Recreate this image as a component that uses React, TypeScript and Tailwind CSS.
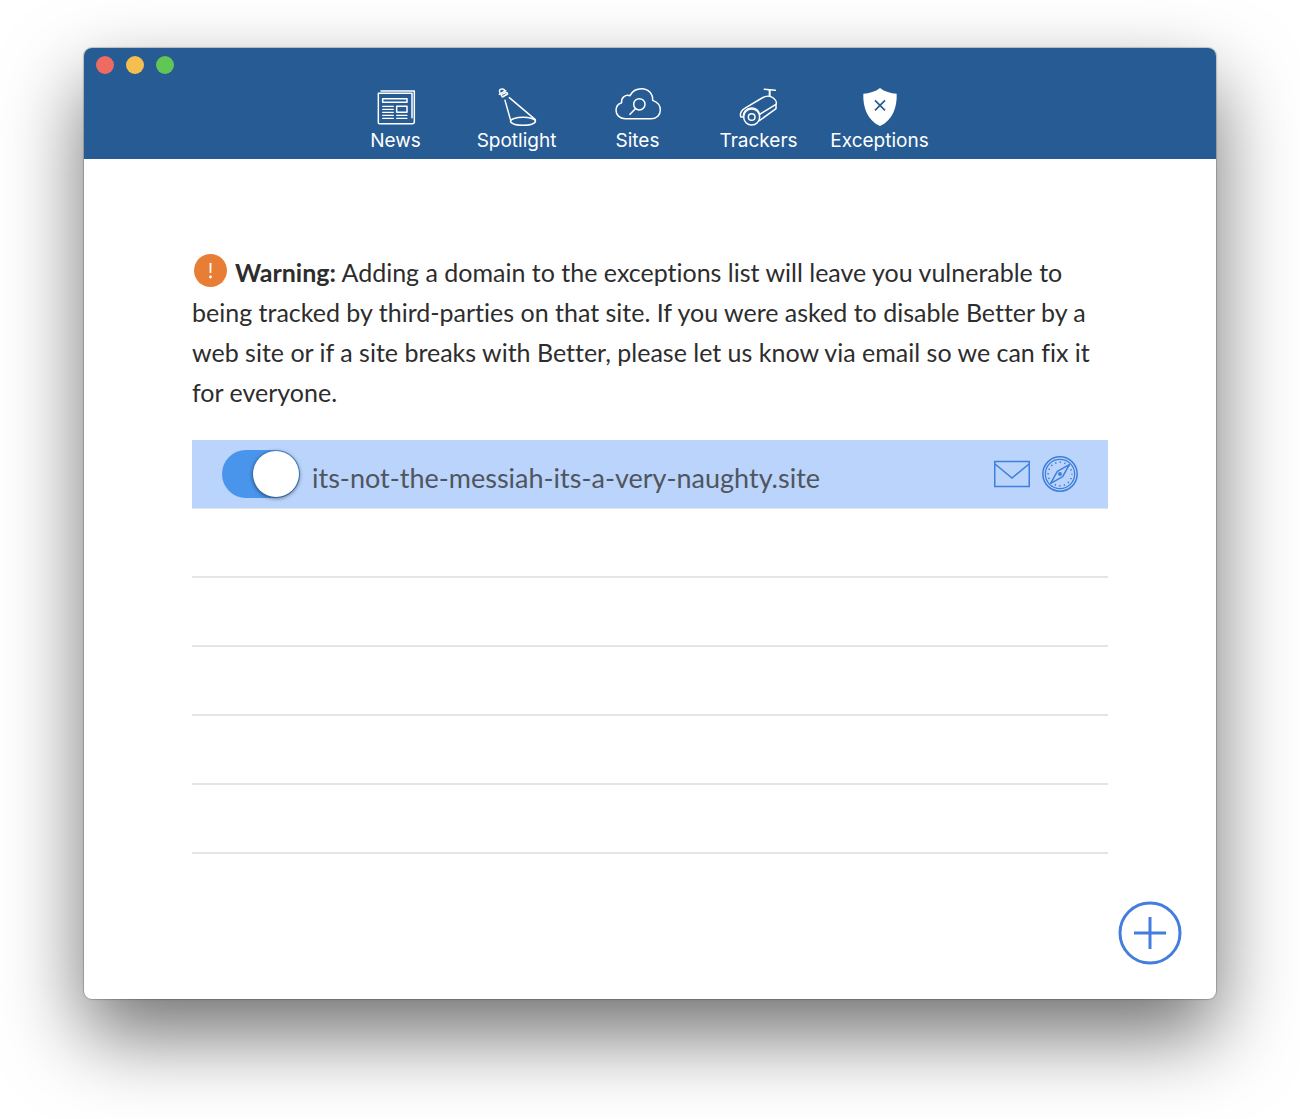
import { useState } from "react";
import type { ReactNode } from "react";

const stroke = {
  fill: "none",
  stroke: "#fff",
  strokeWidth: 4.5,
  strokeLinejoin: "round" as const,
  strokeLinecap: "round" as const,
};

function NewsIcon() {
  return (
    <svg viewBox="33 18 144 120" className="h-10 w-12" aria-hidden="true" {...stroke}>
      <path d="M60 33H160V126" />
      <path d="M52 40H153V113M160 126Q160 131 155 131H55Q52 131 52 128V40" />
      <rect x="65" y="56" width="73" height="11" />
      <rect x="107" y="79" width="31" height="18" />
      <path d="M65 79H97M65 88H97M65 97H97M65 106H97M65 115H97M107 106H138M107 115H138" strokeWidth="4" />
    </svg>
  );
}

function SpotlightIcon() {
  return (
    <svg viewBox="396 18 144 120" className="h-10 w-12" aria-hidden="true" {...stroke}>
      <path d="M418 41C413 33 416 27 422 27C428 26 432 30 431 36" />
      <path d="M415 43L434 32" />
      <path d="M420 44L437 37L440 42L424 51Z" />
      <path d="M432 61L449 121M445 53L523 119" />
      <ellipse cx="486" cy="124" rx="37.500" ry="12" />
    </svg>
  );
}

function SitesIcon() {
  return (
    <svg viewBox="42 18 144 120" className="h-10 w-12" aria-hidden="true" {...stroke}>
      <path d="M76 116C58 116 48 104 48 91C48 80 54 71 65 68C63 54 75 43 90 47C96 34 110 26 125 26C145 26 159 41 158 61C172 66 181 77 181 90C181 105 170 116 154 116Z" />
      <circle cx="118" cy="73" r="17" />
      <path d="M106 86L90 103" />
    </svg>
  );
}

function TrackersIcon() {
  return (
    <svg viewBox="405 18 144 120" className="h-10 w-12" aria-hidden="true" {...stroke}>
      <path d="M493 28L526 31" />
      <path d="M509 31V48" strokeWidth="6" />
      <circle cx="455" cy="111" r="24" />
      <circle cx="455" cy="111" r="10" />
      <path d="M422 110C419 99 425 91 434 85L486 54C497 47 511 47 520 54C528 60 531 66 528 73L479 103" />
      <path d="M424 111H430C429 96 439 86 454 84C466 83 477 91 479 103M528 75V86L478 122" />
    </svg>
  );
}

function ExceptionsIcon() {
  return (
    <svg viewBox="108 18 144 120" className="h-10 w-12" aria-hidden="true" fill="none">
      <path d="M180 24C194 35 212 40 230 41C232 82 217 121 180 138C143 121 128 82 130 41C148 40 166 35 180 24Z" fill="#fff" />
      <path d="M165 61L195 91M195 61L165 91" stroke="#265b94" strokeWidth="5" />
    </svg>
  );
}

function MailIcon() {
  return (
    <svg viewBox="0 0 36 28" className="h-7 w-9" aria-hidden="true" fill="none" stroke="#3f7fdc" strokeWidth="1.5">
      <rect x="0.750" y="1.500" width="34.500" height="25" />
      <path d="M1 4L18 18L35 4" />
    </svg>
  );
}

function CompassIcon() {
  return (
    <svg viewBox="0 0 108 108" className="size-9" aria-hidden="true" fill="none" stroke="#3f7fdc" strokeWidth="4.5">
      <circle cx="54" cy="54" r="51.500" />
      <circle cx="54" cy="54" r="44" strokeWidth="4" />
      <circle cx="54" cy="54" r="35.500" strokeWidth="5" strokeDasharray="4 9.940" strokeDashoffset="2" />
      <path d="M82 26L62 62L26 82L46 46Z" fill="#bbd4fb" strokeLinejoin="round" />
      <circle cx="54" cy="54" r="3.500" fill="#3f7fdc" />
    </svg>
  );
}

const tabs: { label: string; icon: ReactNode }[] = [
  { label: "News", icon: <NewsIcon /> },
  { label: "Spotlight", icon: <SpotlightIcon /> },
  { label: "Sites", icon: <SitesIcon /> },
  { label: "Trackers", icon: <TrackersIcon /> },
  { label: "Exceptions", icon: <ExceptionsIcon /> },
];

const emptyRows = [1, 2, 3, 4, 5];

export default function App() {
  const [enabled, setEnabled] = useState(true);

  return (
    <div className="bg-white px-[84px] pt-12 pb-[120px] font-['Lato',sans-serif] text-[#2d2d2d] [font-variant-ligatures:none]">
      <div className="overflow-hidden rounded-lg bg-white shadow-[0_0_1px_1px_rgba(0,0,0,0.2),0_36px_80px_rgba(0,0,0,0.56)]">
        <header className="bg-[#265b94] pt-2 pb-1">
          <div className="flex gap-3 px-3">
            <button type="button" aria-label="Close" className="size-[18px] rounded-full bg-[#ed6b60]" />
            <button type="button" aria-label="Minimize" className="size-[18px] rounded-full bg-[#f5bf4f]" />
            <button type="button" aria-label="Zoom" className="size-[18px] rounded-full bg-[#62c655]" />
          </div>
          <nav className="mt-3 flex justify-center pr-[25px]">
            {tabs.map((tab) => (
              <button
                key={tab.label}
                type="button"
                className="flex w-[121px] flex-col items-center gap-px font-['Inter',sans-serif] text-[19px] leading-7 text-white"
              >
                {tab.icon}
                {tab.label}
              </button>
            ))}
          </nav>
        </header>

        <main className="flex flex-col">
          <div className="px-[108px] pt-[93px]">
            <p className="text-[25px] leading-10">
              <span
                role="img"
                aria-label="Warning"
                className="mr-2 ml-0.5 inline-flex size-[33px] items-center justify-center rounded-full bg-[#e87e35] align-[-5px]"
              >
                <svg viewBox="0 0 33 33" className="size-[33px]" aria-hidden="true" fill="#fff">
                  <path d="M15.500 9H17.500L17.300 19H15.700Z" />
                  <circle cx="16.500" cy="23" r="1.400" />
                </svg>
              </span>
              <strong className="font-bold">Warning:</strong> Adding a domain to the exceptions list will leave you
              vulnerable to being tracked by third-parties on that site. If you were asked to disable Better by a web
              site or if a site breaks with Better, please let us know via email so we can fix it for everyone.
            </p>

            <ul className="mt-7">
              <li className="flex h-[69px] items-center border-b border-[#e4e4e6] bg-[#bbd4fb] pr-[30px] pl-[30px]">
                <input
                  id="site-enabled"
                  type="checkbox"
                  role="switch"
                  checked={enabled}
                  onChange={(e) => setEnabled(e.target.checked)}
                  className="flex h-12 w-[78px] appearance-none items-center rounded-full bg-gray-300 p-px before:size-[46px] before:rounded-full before:bg-white before:shadow-[0_1px_4px_rgba(0,0,0,0.6)] checked:justify-end checked:bg-[#4a95ec]"
                />
                <label htmlFor="site-enabled" className="ml-3 flex-1 pt-2 text-[27px] text-[#50555e]">
                  its-not-the-messiah-its-a-very-naughty.site
                </label>
                <button type="button" aria-label="Email about this site">
                  <MailIcon />
                </button>
                <button type="button" aria-label="Open in Safari" className="ml-3">
                  <CompassIcon />
                </button>
              </li>
              {emptyRows.map((row) => (
                <li key={row} className="h-[69px] border-b-2 border-[#e5e5e6]" />
              ))}
            </ul>
          </div>

          <button type="button" aria-label="Add exception" className="mt-[47px] mr-[34px] mb-[34px] self-end">
            <svg viewBox="0 0 64 64" className="size-16" aria-hidden="true" fill="none" stroke="#437ddd" strokeWidth="3">
              <circle cx="32" cy="32" r="30" />
              <path d="M16 32H48M32 16V48" />
            </svg>
          </button>
        </main>
      </div>
    </div>
  );
}
